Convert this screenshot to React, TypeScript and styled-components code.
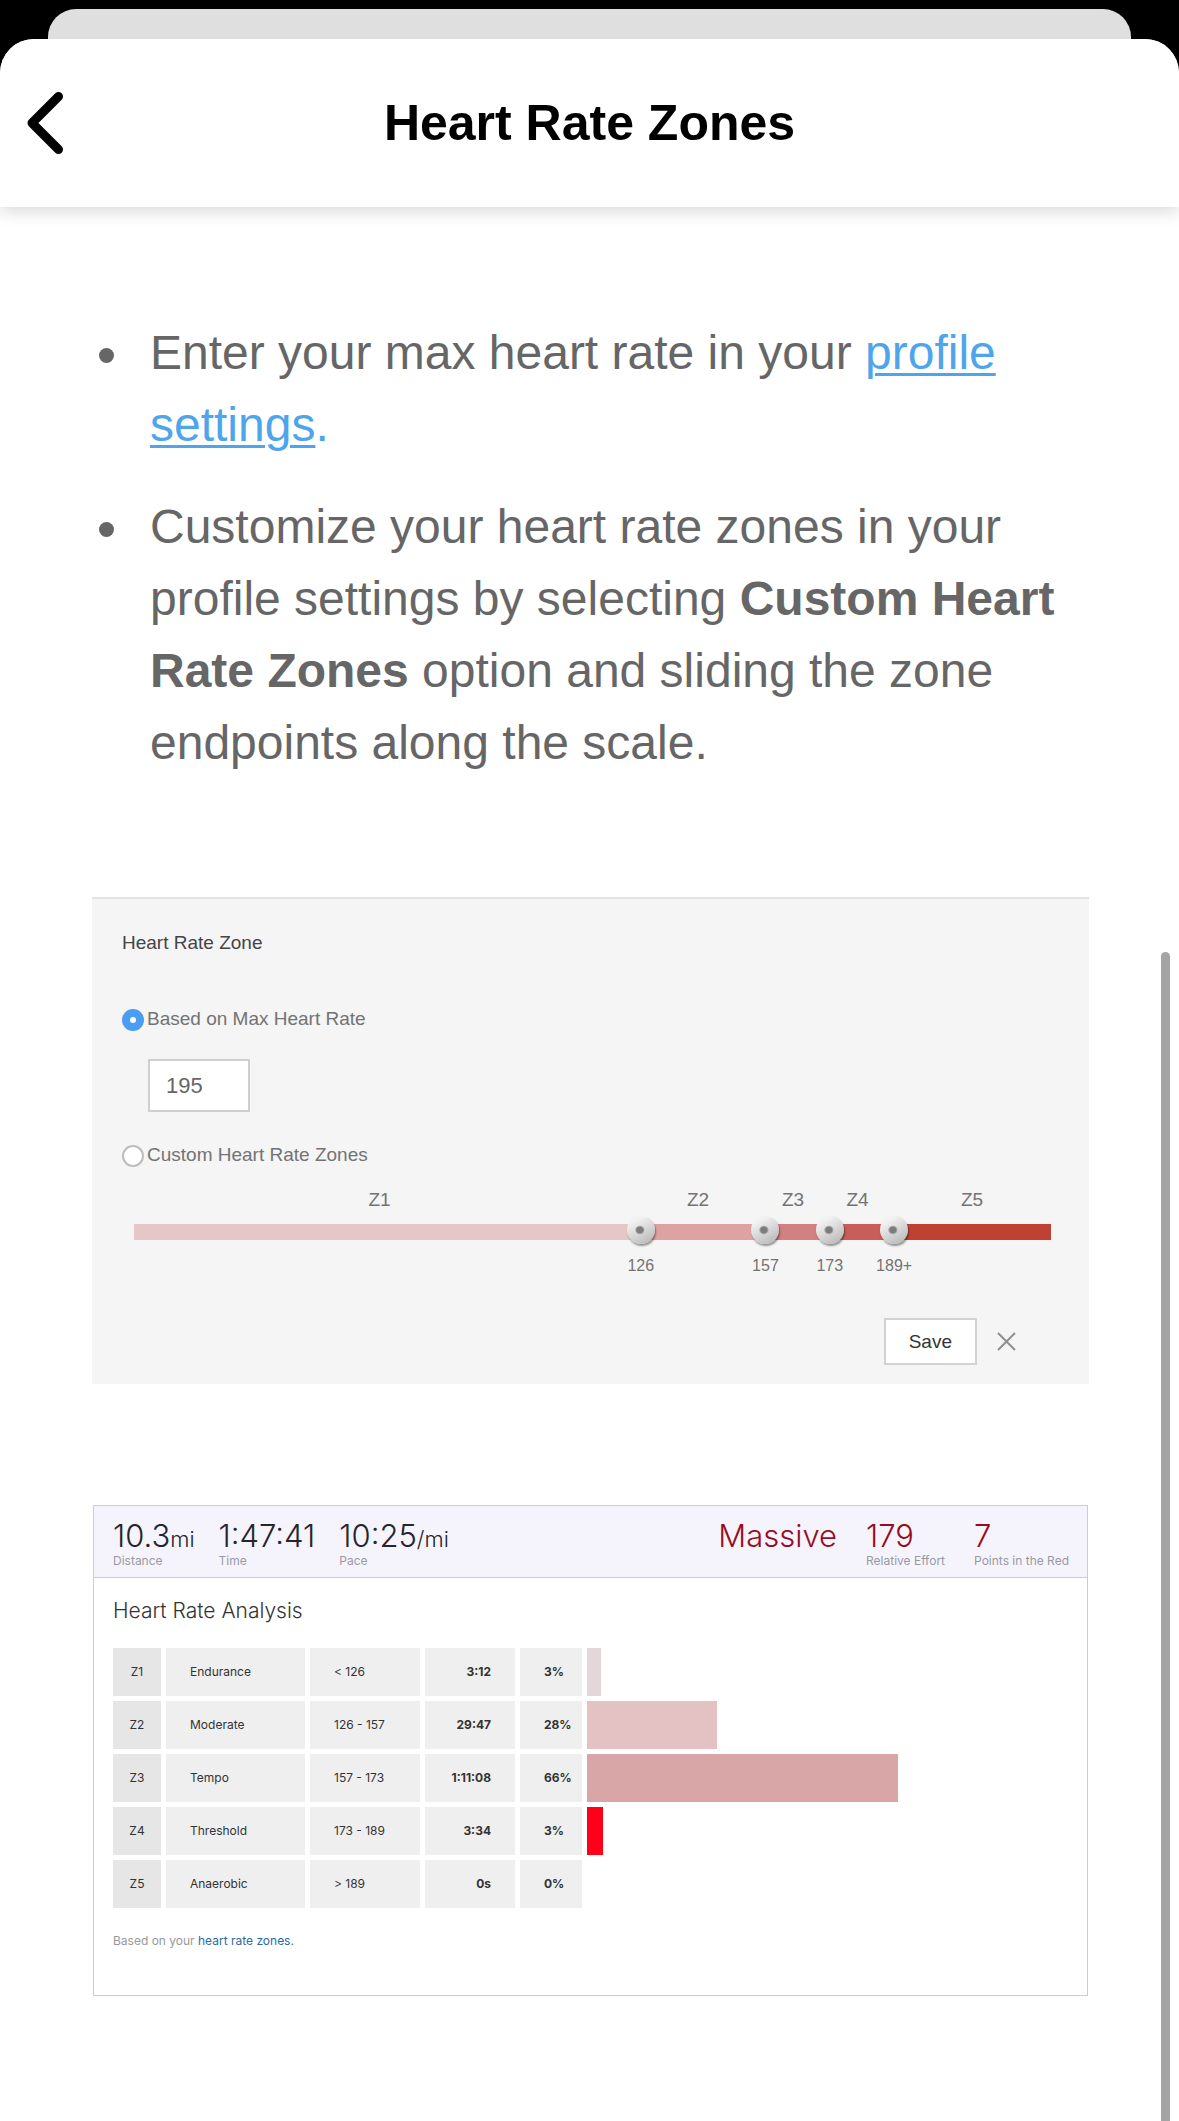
import React, { useState } from "react";
import styled, { createGlobalStyle } from "styled-components";

const helvetica = `"Liberation Sans", Arial, sans-serif`;
const inter = `Inter, Roboto, sans-serif`;

const GlobalStyle = createGlobalStyle`
  *, *::before, *::after { box-sizing: border-box; }
  body {
    margin: 0;
    background: #000;
    font-family: ${helvetica};
  }
`;

const Page = styled.div`
  display: flex;
  flex-direction: column;
  min-height: 100vh;
  padding-top: 9px;
`;

const SheetBehind = styled.div`
  height: 30px;
  margin: 0 48px;
  border-radius: 28px 28px 0 0;
  background: #dfdfdf;
`;

const Sheet = styled.div`
  position: relative;
  flex: 1;
  border-radius: 34px 34px 0 0;
  background: #fff;
`;

const Header = styled.header`
  display: grid;
  grid-template-columns: 1fr auto 1fr;
  align-items: center;
  min-height: 168px;
  padding: 0 20px;
  border-radius: 34px 34px 0 0;
  background: #fff;
  box-shadow: 0 4px 18px rgba(0, 0, 0, 0.16);
  clip-path: inset(0 0 -30px 0);
`;

const BackButton = styled.button`
  justify-self: start;
  display: flex;
  padding: 0;
  border: 0;
  background: none;
  color: #000;
`;

const Title = styled.h1`
  margin: 0;
  font-size: 50px;
  line-height: 60px;
  font-weight: 700;
  color: #000;
`;

const Article = styled.main`
  display: flex;
  flex-direction: column;
  padding: 110px 90px 125px 92px;
`;

const Tips = styled.ul`
  display: flex;
  flex-direction: column;
  gap: 30px;
  margin: 0 0 118px;
  padding: 0;
  list-style: none;
`;

const Tip = styled.li`
  display: grid;
  grid-template-columns: 15px 1fr;
  column-gap: 36px;
  padding-left: 7px;
  font-size: 48px;
  line-height: 72px;
  color: #666;

  &::before {
    content: "";
    width: 15px;
    height: 15px;
    margin-top: 31px;
    border-radius: 50%;
    background: #666;
  }
`;

const TipLink = styled.a`
  color: #4fa5ec;
  text-decoration: none;

  span {
    text-decoration: underline;
    text-decoration-thickness: 3px;
    text-underline-offset: 4px;
  }
`;

const ZoneForm = styled.form`
  display: flex;
  flex-direction: column;
  margin-bottom: 121px;
  padding: 32px 38px 19px 30px;
  border-top: 2px solid #e3e3e3;
  background: #f5f5f5;
  font-size: 19px;
  line-height: 24px;
  color: #737373;
`;

const FormTitle = styled.h2`
  margin: 0 0 52px;
  font-size: 19px;
  line-height: 24px;
  font-weight: 400;
  color: #444;
`;

const RadioRow = styled.label`
  display: flex;
  align-items: flex-end;
  gap: 3px;
`;

const Radio = styled.input`
  appearance: none;
  width: 22px;
  height: 22px;
  margin: 0;
  border: 2px solid #bdbdbd;
  border-radius: 50%;
  background: #fff;

  &:checked {
    border: 8px solid #4a9df2;
  }
`;

const MaxRateInput = styled.input`
  width: 102px;
  height: 53px;
  margin: 28px 0 31px 26px;
  padding: 0 16px;
  border: 2px solid #cfcfcf;
  border-radius: 0;
  background: #fff;
  font-family: ${helvetica};
  font-size: 22px;
  color: #666;
`;

const ZoneNames = styled.div`
  display: grid;
  grid-template-columns: 515fr 122fr 68fr 61fr 168fr;
  margin: 21px -5px 12px 0;
  text-align: center;
`;

const Scale = styled.div`
  display: grid;
  grid-template-columns: 126fr 31fr 16fr 16fr 39fr;
  margin-left: 12px;
`;

const Track = styled(Scale)`
  position: relative;
  height: 16px;
`;

const Segment = styled.span<{ $color: string }>`
  background: ${(p) => p.$color};
`;

const Endpoint = styled.input`
  position: absolute;
  top: -8px;
  left: -14px;
  width: calc(100% + 28px);
  height: 28px;
  margin: 0;
  appearance: none;
  background: none;
  pointer-events: none;

  &::-webkit-slider-thumb {
    appearance: none;
    pointer-events: auto;
    width: 28px;
    height: 28px;
    border-radius: 50%;
    background:
      radial-gradient(ellipse at 46% 50%, #7c7c7c 0 3px, #a3a3a3 4px, transparent 5px),
      linear-gradient(150deg, #f2f2f2 20%, #d2d2d2 60%, #b2b2b2);
    box-shadow: 1px 2px 2px rgba(0, 0, 0, 0.4);
  }
`;

const EndpointValues = styled(Scale)`
  margin-top: 16px;
  font-size: 16px;
  line-height: 20px;
`;

const EndpointValue = styled.output`
  justify-self: end;
  width: 60px;
  margin-right: -30px;
  text-align: center;
`;

const FormActions = styled.div`
  display: flex;
  justify-content: flex-end;
  align-items: center;
  gap: 20px;
  margin: 42px 35px 0 0;
`;

const SaveButton = styled.button`
  height: 47px;
  padding: 0 23px;
  border: 2px solid #d2d2d2;
  background: #fff;
  font-family: ${helvetica};
  font-size: 19px;
  color: #333;
`;

const CloseButton = styled.button`
  display: flex;
  padding: 0;
  border: 0;
  background: none;
  color: #8f8f8f;
`;

const Analysis = styled.section`
  margin: 0 1px;
  border: 1px solid #cdcdcf;
  font-family: ${inter};
  color: #333;
`;

const Summary = styled.div`
  display: flex;
  justify-content: space-between;
  padding: 12px 18px 8px 19px;
  border-bottom: 1px solid #cdcdcf;
  background: #f5f4fc;
`;

const StatGroup = styled.div<{ $gap: number }>`
  display: flex;
  gap: ${(p) => p.$gap}px;
`;

const Stat = styled.div`
  display: flex;
  flex-direction: column;
`;

const StatValue = styled.span<{ $alert?: boolean }>`
  font-size: 31px;
  line-height: 35px;
  font-weight: 300;
  color: ${(p) => (p.$alert ? "#980c22" : "#26242c")};
`;

const Unit = styled.span`
  font-size: 22px;
  line-height: 1;
`;

const StatLabel = styled.span`
  font-size: 12px;
  line-height: 16px;
  color: #9a99a3;
`;

const AnalysisBody = styled.div`
  padding: 19px 19px 46px;
`;

const AnalysisTitle = styled.h2`
  margin: 0 0 18px;
  font-size: 21px;
  line-height: 28px;
  font-weight: 300;
  color: #333;
`;

const ZoneTable = styled.table`
  width: calc(100% + 10px);
  margin: 0 -5px 20px;
  border-spacing: 5px;
  table-layout: fixed;
  font-size: 12px;
  line-height: 16px;
`;

const Cell = styled.td`
  height: 48px;
  padding: 0 24px;
  background: #efefef;
`;

const ZoneCell = styled.th`
  padding: 0;
  background: #e6e6e6;
  font-weight: 400;
  text-align: center;
`;

const TimeCell = styled(Cell)`
  font-weight: 700;
  text-align: right;
`;

const ShareCell = styled(Cell)`
  padding-right: 0;
  font-weight: 700;
`;

const BarCell = styled.td`
  padding: 0 10px 0 0;
`;

const Bar = styled.div<{ $color: string }>`
  height: 48px;
  background: ${(p) => p.$color};
`;

const Note = styled.p`
  margin: 0;
  font-size: 12px;
  line-height: 16px;
  color: #999;

  a {
    color: #2a6b9f;
    text-decoration: none;
  }
`;

const ScrollThumb = styled.div`
  position: absolute;
  top: 913px;
  right: 9px;
  bottom: 0;
  width: 9px;
  border-radius: 5px 5px 0 0;
  background: #a4a4a4;
`;

const segmentColors = ["#e6c6c6", "#dfa2a3", "#d38083", "#c95d58", "#bf4134"];

const zones = [
  { id: "Z1", name: "Endurance", range: "< 126", time: "3:12", share: "3%", seconds: 192, color: "#e5d7d9" },
  { id: "Z2", name: "Moderate", range: "126 - 157", time: "29:47", share: "28%", seconds: 1787, color: "#e4c1c2" },
  { id: "Z3", name: "Tempo", range: "157 - 173", time: "1:11:08", share: "66%", seconds: 4268, color: "#d9a6a8" },
  { id: "Z4", name: "Threshold", range: "173 - 189", time: "3:34", share: "3%", seconds: 214, color: "#ff0019" },
  { id: "Z5", name: "Anaerobic", range: "> 189", time: "0s", share: "0%", seconds: 0, color: "#c00018" },
];

const totalSeconds = zones.reduce((sum, zone) => sum + zone.seconds, 0);

function ZoneSettings() {
  const [mode, setMode] = useState("max");
  const [maxRate, setMaxRate] = useState("195");
  const [endpoints, setEndpoints] = useState([126, 157, 173, 189]);

  const moveEndpoint = (index: number, value: number) =>
    setEndpoints(endpoints.map((old, i) => (i === index ? value : old)));

  return (
    <ZoneForm onSubmit={(e) => e.preventDefault()}>
      <FormTitle>Heart Rate Zone</FormTitle>
      <RadioRow>
        <Radio type="radio" name="mode" checked={mode === "max"} onChange={() => setMode("max")} />
        Based on Max Heart Rate
      </RadioRow>
      <MaxRateInput
        aria-label="Max heart rate"
        value={maxRate}
        onChange={(e) => setMaxRate(e.target.value)}
      />
      <RadioRow>
        <Radio type="radio" name="mode" checked={mode === "custom"} onChange={() => setMode("custom")} />
        Custom Heart Rate Zones
      </RadioRow>
      <ZoneNames>
        {zones.map((zone) => (
          <span key={zone.id}>{zone.id}</span>
        ))}
      </ZoneNames>
      <Track>
        {segmentColors.map((color) => (
          <Segment key={color} $color={color} />
        ))}
        {endpoints.map((value, i) => (
          <Endpoint
            key={i}
            type="range"
            min={0}
            max={228}
            value={value}
            aria-label={`End of zone ${i + 1}`}
            onChange={(e) => moveEndpoint(i, Number(e.target.value))}
          />
        ))}
      </Track>
      <EndpointValues>
        {endpoints.map((value, i) => (
          <EndpointValue key={i}>{i === endpoints.length - 1 ? `${value}+` : value}</EndpointValue>
        ))}
      </EndpointValues>
      <FormActions>
        <SaveButton type="submit">Save</SaveButton>
        <CloseButton type="button" aria-label="Close">
          <svg width="19" height="19" viewBox="0 0 19 19" fill="none" stroke="currentColor" strokeWidth="2">
            <path d="M1 1L18 18M18 1L1 18" />
          </svg>
        </CloseButton>
      </FormActions>
    </ZoneForm>
  );
}

function HeartRateAnalysis() {
  return (
    <Analysis>
      <Summary>
        <StatGroup $gap={24}>
          <Stat>
            <StatValue>10.3<Unit>mi</Unit></StatValue>
            <StatLabel>Distance</StatLabel>
          </Stat>
          <Stat>
            <StatValue>1:47:41</StatValue>
            <StatLabel>Time</StatLabel>
          </Stat>
          <Stat>
            <StatValue>10:25<Unit>/mi</Unit></StatValue>
            <StatLabel>Pace</StatLabel>
          </Stat>
        </StatGroup>
        <StatGroup $gap={29}>
          <Stat>
            <StatValue $alert>Massive</StatValue>
          </Stat>
          <Stat>
            <StatValue $alert>179</StatValue>
            <StatLabel>Relative Effort</StatLabel>
          </Stat>
          <Stat>
            <StatValue $alert>7</StatValue>
            <StatLabel>Points in the Red</StatLabel>
          </Stat>
        </StatGroup>
      </Summary>
      <AnalysisBody>
        <AnalysisTitle>Heart Rate Analysis</AnalysisTitle>
        <ZoneTable>
          <colgroup>
            <col width="48" />
            <col width="139" />
            <col width="110" />
            <col width="90" />
            <col width="62" />
            <col />
          </colgroup>
          <tbody>
            {zones.map((zone) => (
              <tr key={zone.id}>
                <ZoneCell scope="row">{zone.id}</ZoneCell>
                <Cell>{zone.name}</Cell>
                <Cell>{zone.range}</Cell>
                <TimeCell>{zone.time}</TimeCell>
                <ShareCell>{zone.share}</ShareCell>
                <BarCell>
                  <Bar $color={zone.color} style={{ width: `${(zone.seconds / totalSeconds) * 100}%` }} />
                </BarCell>
              </tr>
            ))}
          </tbody>
        </ZoneTable>
        <Note>
          Based on your <a href="#zones">heart rate zones.</a>
        </Note>
      </AnalysisBody>
    </Analysis>
  );
}

export default function App() {
  return (
    <Page>
      <GlobalStyle />
      <SheetBehind />
      <Sheet>
        <Header>
          <BackButton type="button" aria-label="Back">
            <svg width="50" height="66" viewBox="0 0 50 66" fill="none" stroke="currentColor" strokeWidth="9" strokeLinecap="round" strokeLinejoin="round">
              <path d="M38.500 6.500L12 33L38.500 59.500" />
            </svg>
          </BackButton>
          <Title>Heart Rate Zones</Title>
        </Header>
        <Article>
          <Tips>
            <Tip>
              <div>
                Enter your max heart rate in your{" "}
                <TipLink href="#profile"><span>profile settings</span>.</TipLink>
              </div>
            </Tip>
            <Tip>
              <div>
                Customize your heart rate zones in your profile settings by selecting{" "}
                <b>Custom Heart Rate Zones</b> option and sliding the zone endpoints along the scale.
              </div>
            </Tip>
          </Tips>
          <ZoneSettings />
          <HeartRateAnalysis />
        </Article>
        <ScrollThumb />
      </Sheet>
    </Page>
  );
}
